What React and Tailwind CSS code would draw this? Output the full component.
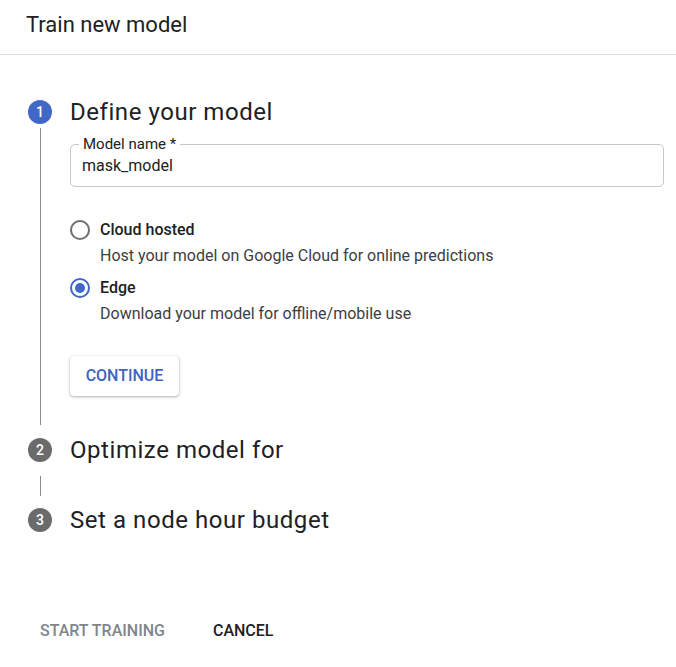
export default function App() {
  return (
    <div className="w-[676px] h-[667px] bg-white font-['Roboto',sans-serif] text-[#202124] overflow-hidden">
      <div className="h-[55px] border-b border-[#e0e0e0] pl-[26px] pt-[11px]">
        <h1 className="text-[22px] leading-[28px] text-[#202124]">Train new model</h1>
      </div>

      <div className="pl-[28px] pr-[12px] pt-[44px]">
        {/* step 1 */}
        <div className="flex items-center h-[26px]">
          <div className="w-[24px] h-[24px] rounded-full bg-[#4167c7] text-white text-[14px] font-medium flex items-center justify-center">1</div>
          <h2 className="ml-[18px] text-[24px] leading-[26px] tracking-[0.55px] text-[#202124]">Define your model</h2>
        </div>
        <div className="flex">
          <div className="w-[24px] flex justify-center">
            <div className="w-px bg-[#8a8a8a] mt-[3px] h-[297px]" />
          </div>
          <div className="ml-[18px] flex-1">
            <div className="relative mt-[19px] h-[43px] border border-[#c8c8c8] rounded-[5px]">
              <span className="absolute -top-[10px] left-[8px] bg-white px-[4px] text-[15px] leading-[18px] text-[#202124]">Model name *</span>
              <div className="pl-[11px] pt-[11px] text-[16px] leading-[20px] text-[#202124]">mask_model</div>
            </div>

            <div className="mt-[33px] flex">
              <div className="w-[20px] h-[20px] rounded-full border-2 border-[#6e6e6e]" />
              <div className="ml-[10px]">
                <div className="text-[16px] font-medium leading-[20px]">Cloud hosted</div>
                <div className="text-[16px] leading-[20px] mt-[6px] text-[#3c4043]">Host your model on Google Cloud for online predictions</div>
              </div>
            </div>
            <div className="mt-[12px] flex">
              <div className="w-[20px] h-[20px] rounded-full border-2 border-[#4167c7] flex items-center justify-center">
                <div className="w-[10px] h-[10px] rounded-full bg-[#4167c7]" />
              </div>
              <div className="ml-[10px]">
                <div className="text-[16px] font-medium leading-[20px]">Edge</div>
                <div className="text-[16px] leading-[20px] mt-[6px] text-[#3c4043]">Download your model for offline/mobile use</div>
              </div>
            </div>

            <button className="mt-[32px] h-[40px] w-[109px] rounded-[4px] bg-white text-[#3d63c4] text-[16px] font-medium shadow-[0_1px_3px_rgba(0,0,0,0.3),0_0_1px_rgba(0,0,0,0.15)]">CONTINUE</button>
          </div>
        </div>

        {/* step 2 */}
        <div className="flex items-center h-[26px] mt-[12px]">
          <div className="w-[24px] h-[24px] rounded-full bg-[#6b6b6b] text-white text-[14px] font-medium flex items-center justify-center">2</div>
          <h2 className="ml-[18px] text-[24px] leading-[26px] tracking-[0.55px]">Optimize model for</h2>
        </div>
        <div className="w-[24px] flex justify-center">
          <div className="w-px bg-[#8a8a8a] mt-[13px] h-[20px]" />
        </div>
        {/* step 3 */}
        <div className="flex items-center h-[26px] mt-[11px]">
          <div className="w-[24px] h-[24px] rounded-full bg-[#6b6b6b] text-white text-[14px] font-medium flex items-center justify-center">3</div>
          <h2 className="ml-[18px] text-[24px] leading-[26px] tracking-[0.55px]">Set a node hour budget</h2>
        </div>
      </div>

      <div className="flex items-center pl-[40px] mt-[86px] text-[16px] font-medium">
        <span className="text-[#80868b]">START TRAINING</span>
        <span className="ml-[48px] text-[#202124]">CANCEL</span>
      </div>
    </div>
  );
}
